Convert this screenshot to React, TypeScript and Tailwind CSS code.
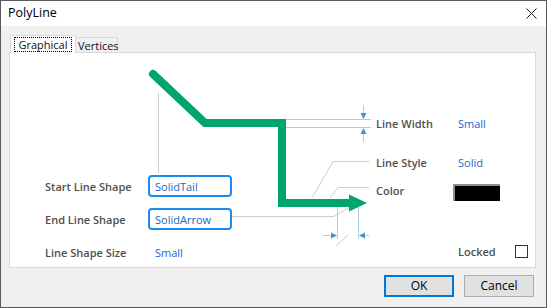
const FONT = { fontFamily: '"Open Sans", "Noto Sans", sans-serif' };

function Diagram() {
  return (
    <svg className="absolute inset-0 h-full w-full" width="525" height="214">
      <g transform="translate(-1,-1)" fill="none">
        {/* leader lines */}
        <g stroke="#cdcdcd" strokeWidth="1">
          <path d="M149.5 41 V121" />
          <path d="M360 109.5 H324 L303 146" />
          <path d="M360 135.5 H329 L321 146" />
          <path d="M223 164.5 H325 L341 155" />
          <path d="M339 183 L327 194" />
        </g>
        {/* width dimension */}
        <g stroke="#a8d0ea" strokeWidth="1">
          <path d="M277 67.5 H362" />
          <path d="M277 75.5 H362" />
          <path d="M354.5 53 V62" />
          <path d="M354.5 80 V90" />
          <path d="M328.5 151 V187" />
          <path d="M349.5 151 V187" />
          <path d="M314 183.5 H323" />
          <path d="M354 183.5 H360" />
        </g>
        <g fill="#3b97d3">
          <polygon points="351.5,61 357.5,61 354.5,67" />
          <polygon points="351.5,82 357.5,82 354.5,76" />
          <polygon points="322,180.5 322,186.5 328,183.5" />
          <polygon points="356,180.5 356,186.5 350,183.5" />
        </g>
        {/* polyline */}
        <path
          d="M144 22 L196 71 L273 71 L273 151 L342 151"
          stroke="#00a56e"
          strokeWidth="8"
          strokeLinecap="round"
          strokeLinejoin="miter"
        />
        <polygon points="340,142.5 340,159.5 358,151" fill="#00a56e" />
      </g>
    </svg>
  );
}

function ShapeBox({ value }: { value: string }) {
  return (
    <div className="flex h-[22px] w-[84px] items-center rounded-[4px] border-2 border-[#1a8cf0] bg-white pl-[5px] font-normal text-[#1866c9]">
      {value}
    </div>
  );
}

export default function App() {
  return (
    <div
      className="flex h-[308px] w-[547px] flex-col border border-[#595959] bg-[#f0f0f0] text-[11px] leading-none"
      style={FONT}
    >
      <div className="flex h-[25px] shrink-0 items-center justify-between bg-white pl-[7px] pr-[9px]">
        <span className="text-[12.5px] text-black">PolyLine</span>
        <svg width="11" height="11" viewBox="0 0 11 11">
          <path d="M0.5 0.5 L10.5 10.5 M10.5 0.5 L0.5 10.5" stroke="#1a1a1a" strokeWidth="1" />
        </svg>
      </div>

      <div className="flex flex-1 flex-col pl-[8px] pr-[10px] pt-[9px]">
        <div className="flex h-[17px] items-end pl-px">
          <div className="relative z-10 -mb-px flex h-[18px] w-[66px] items-center justify-center border border-b-0 border-[#d9d9d9] bg-white">
            <span className="px-[4px] py-[2px] text-[#111] outline outline-1 outline-dotted outline-black -outline-offset-1">
              Graphical
            </span>
          </div>
          <div className="flex h-[15px] w-[42px] items-center border border-b-0 border-l-0 border-[#d9d9d9] pl-[2px] text-[#111]">
            Vertices
          </div>
        </div>

        <div className="relative h-[216px] w-[527px] border border-[#d9d9d9] bg-white">
          <Diagram />
          <div className="relative flex h-full pl-[35px] pr-[7px]">
            <div className="grid auto-rows-[22px] grid-cols-[103px_84px] items-center gap-y-[11px] pt-[122px] font-semibold text-[#4f4f4f]">
              <span>Start Line Shape</span>
              <ShapeBox value="SolidTail" />
              <span>End Line Shape</span>
              <ShapeBox value="SolidArrow" />
              <span>Line Shape Size</span>
              <span className="pl-[7px] font-normal text-[#1866c9]">Small</span>
            </div>

            <div className="ml-auto flex w-[152px] flex-col pt-[60px]">
              <div className="grid h-5 grid-cols-[82px_1fr] items-center">
                <span className="font-semibold text-[#4f4f4f]">Line Width</span>
                <span className="text-[#1866c9]">Small</span>
              </div>
              <div className="mt-[19px] grid h-5 grid-cols-[82px_1fr] items-center">
                <span className="font-semibold text-[#4f4f4f]">Line Style</span>
                <span className="text-[#1866c9]">Solid</span>
              </div>
              <div className="mt-[10px] grid h-5 grid-cols-[82px_1fr] items-center">
                <span className="-mt-[3px] font-semibold text-[#4f4f4f]">Color</span>
                <div className="-ml-[5px] h-[17px] w-[47px] border-l-2 border-t-2 border-[#8e8e8e] bg-black" />
              </div>
              <div className="mt-[39px] grid h-5 grid-cols-[82px_1fr] items-center">
                <span />
                <div className="flex w-[70px] items-center justify-between">
                  <span className="font-semibold text-[#4f4f4f]">Locked</span>
                  <div className="h-[13px] w-[13px] border border-[#333] bg-white" />
                </div>
              </div>
            </div>
          </div>
        </div>

        <div className="mt-[7px] mr-[2px] flex justify-end gap-[10px] text-[12px] text-black">
          <button className="flex h-[22px] w-[70px] items-center justify-center border-2 border-[#0078d7] bg-[#e1e1e1]">
            OK
          </button>
          <button className="flex h-[22px] w-[70px] items-center justify-center border border-[#adadad] bg-[#e1e1e1]">
            Cancel
          </button>
        </div>
      </div>
    </div>
  );
}
